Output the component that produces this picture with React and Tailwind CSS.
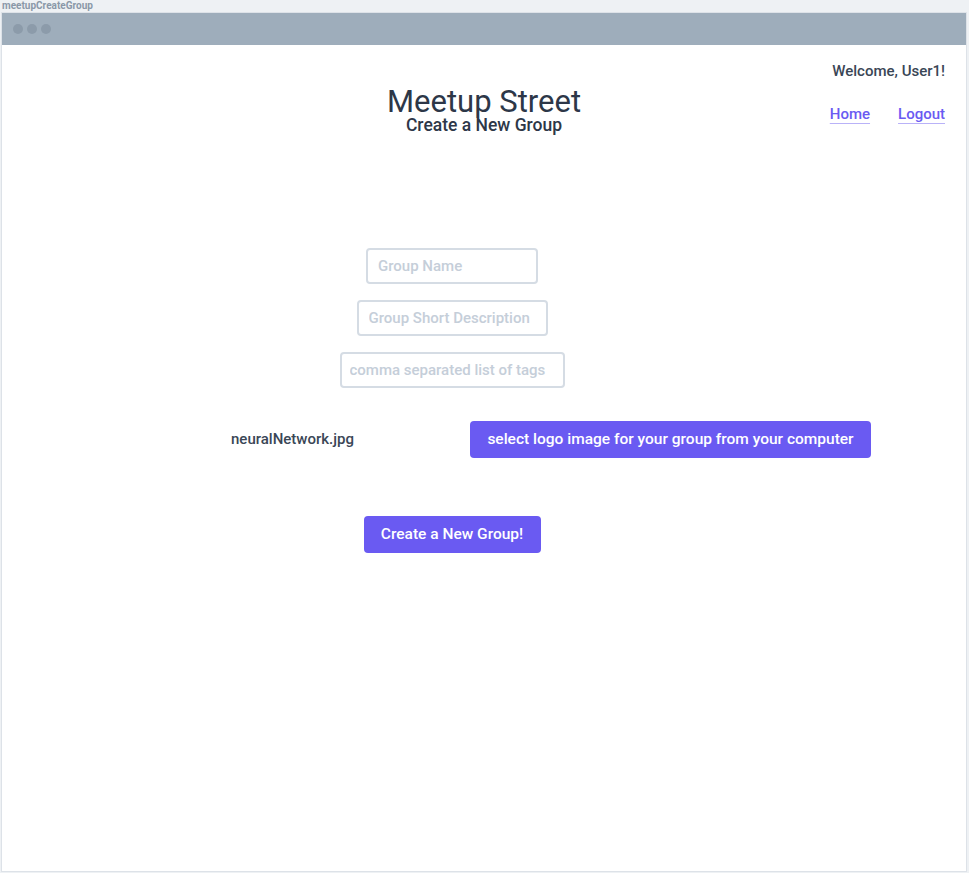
export default function App() {
  const font = { fontFamily: "Roboto, 'Noto Sans', sans-serif" }
  return (
    <div className="w-[969px] h-[873px] bg-[#eef1f4] relative" style={font}>
      <div className="h-[12px] pl-[2px] text-[10px] leading-[11px] font-bold text-[#8a98a8]">meetupCreateGroup</div>
      <div className="ml-[1px] w-[966px] h-[860px] bg-white border border-[#dde2e8] flex flex-col">
        <div className="h-[32px] bg-[#9eadbb] flex items-center gap-[4px] pl-[11px] shrink-0">
          <span className="w-[10px] h-[10px] rounded-full bg-[#8c9baa]" />
          <span className="w-[10px] h-[10px] rounded-full bg-[#8c9baa]" />
          <span className="w-[10px] h-[10px] rounded-full bg-[#8c9baa]" />
        </div>
        <div className="relative flex flex-col items-center">
          <div className="absolute right-[21px] top-[16px] flex flex-col items-end">
            <div className="text-[15px] leading-[20px] font-medium text-[#3a4656]">Welcome, User1!</div>
            <div className="mt-[23px] flex gap-[28px] text-[15px] leading-[20px] font-medium text-[#6a5af2]">
              <a className="underline decoration-[#b9b2f8] underline-offset-4">Home</a>
              <a className="underline decoration-[#b9b2f8] underline-offset-4">Logout</a>
            </div>
          </div>
          <div className="mt-[43px] text-[31px] leading-[28px] text-[#2d3748]">Meetup Street</div>
          <div className="mt-[1px] text-[17.5px] leading-[16px] font-medium text-[#2d3748]">Create a New Group</div>
          <div className="mt-[115px] flex flex-col items-center gap-[16px] -ml-[64px]">
            <input placeholder="Group Name" className="w-[172px] h-[36px] border-2 border-[#d5dce4] rounded px-[10px] text-[15px] font-medium placeholder:text-[#c5ced9]" />
            <input placeholder="Group Short Description" className="w-[191px] h-[36px] border-2 border-[#d5dce4] rounded px-[10px] text-[15px] font-medium placeholder:text-[#c5ced9]" />
            <input placeholder="comma separated list of tags" className="w-[225px] h-[36px] border-2 border-[#d5dce4] rounded px-[8px] text-[15px] font-medium placeholder:text-[#c5ced9]" />
          </div>
          <div className="mt-[33px] w-full flex items-center pl-[229px]">
            <span className="w-[239px] text-[15px] font-medium text-[#3a4656]">neuralNetwork.jpg</span>
            <button className="w-[401px] h-[37px] rounded bg-[#6a5af2] text-white text-[15.5px] font-medium">select logo image for your group from your computer</button>
          </div>
          <button className="mt-[58px] -ml-[64px] w-[177px] h-[37px] rounded bg-[#6a5af2] text-white text-[15.5px] font-medium">Create a New Group!</button>
        </div>
      </div>
    </div>
  )
}
